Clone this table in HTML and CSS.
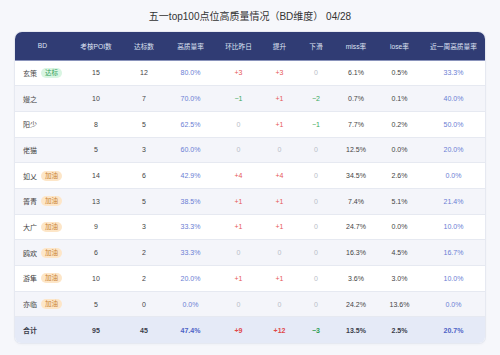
FILE: index.html
```html
<!DOCTYPE html>
<html lang="zh-CN">
<head>
<meta charset="utf-8">
<title>五一top100点位高质量情况</title>
<link rel="stylesheet" href="styles.css">
</head>
<body>
<div class="page">
  <h1 class="title">五一top100点位高质量情况（BD维度） 04/28</h1>
  <div class="card">
    <table class="grid">
      <colgroup>
        <col class="c1"><col class="c2"><col class="c3"><col class="c4"><col class="c5">
        <col class="c6"><col class="c7"><col class="c8"><col class="c9"><col class="c10">
      </colgroup>
      <thead>
        <tr>
          <th>BD</th><th>考核POI数</th><th>达标数</th><th>高质量率</th><th>环比昨日</th>
          <th>提升</th><th>下滑</th><th>miss率</th><th>lose率</th><th>近一周高质量率</th>
        </tr>
      </thead>
      <tbody>
        <tr>
          <td class="name">玄策<span class="tag ok">达标</span></td><td>15</td><td>12</td><td class="rate">80.0%</td>
          <td class="up">+3</td><td class="up">+3</td><td class="zero">0</td><td>6.1%</td><td>0.5%</td><td class="rate">33.3%</td>
        </tr>
        <tr>
          <td class="name">嫚之</td><td>10</td><td>7</td><td class="rate">70.0%</td>
          <td class="down">−1</td><td class="up">+1</td><td class="down">−2</td><td>0.7%</td><td>0.1%</td><td class="rate">40.0%</td>
        </tr>
        <tr>
          <td class="name">阳少</td><td>8</td><td>5</td><td class="rate">62.5%</td>
          <td class="zero">0</td><td class="up">+1</td><td class="down">−1</td><td>7.7%</td><td>0.2%</td><td class="rate">50.0%</td>
        </tr>
        <tr>
          <td class="name">佬猫</td><td>5</td><td>3</td><td class="rate">60.0%</td>
          <td class="zero">0</td><td class="zero">0</td><td class="zero">0</td><td>12.5%</td><td>0.0%</td><td class="rate">20.0%</td>
        </tr>
        <tr>
          <td class="name">如乂<span class="tag go">加油</span></td><td>14</td><td>6</td><td class="rate">42.9%</td>
          <td class="up">+4</td><td class="up">+4</td><td class="zero">0</td><td>34.5%</td><td>2.6%</td><td class="rate">0.0%</td>
        </tr>
        <tr>
          <td class="name">箐青<span class="tag go">加油</span></td><td>13</td><td>5</td><td class="rate">38.5%</td>
          <td class="up">+1</td><td class="up">+1</td><td class="zero">0</td><td>7.4%</td><td>5.1%</td><td class="rate">21.4%</td>
        </tr>
        <tr>
          <td class="name">大广<span class="tag go">加油</span></td><td>9</td><td>3</td><td class="rate">33.3%</td>
          <td class="up">+1</td><td class="up">+1</td><td class="zero">0</td><td>24.7%</td><td>0.0%</td><td class="rate">10.0%</td>
        </tr>
        <tr>
          <td class="name">鸥欢<span class="tag go">加油</span></td><td>6</td><td>2</td><td class="rate">33.3%</td>
          <td class="zero">0</td><td class="zero">0</td><td class="zero">0</td><td>16.3%</td><td>4.5%</td><td class="rate">16.7%</td>
        </tr>
        <tr>
          <td class="name">游隼<span class="tag go">加油</span></td><td>10</td><td>2</td><td class="rate">20.0%</td>
          <td class="up">+1</td><td class="up">+1</td><td class="zero">0</td><td>3.6%</td><td>3.0%</td><td class="rate">10.0%</td>
        </tr>
        <tr>
          <td class="name">亦临<span class="tag go">加油</span></td><td>5</td><td>0</td><td class="rate">0.0%</td>
          <td class="zero">0</td><td class="zero">0</td><td class="zero">0</td><td>24.2%</td><td>13.6%</td><td class="rate">0.0%</td>
        </tr>
      </tbody>
      <tfoot>
        <tr>
          <td class="name">合计</td><td>95</td><td>45</td><td class="rate">47.4%</td>
          <td class="up">+9</td><td class="up">+12</td><td class="down">−3</td><td>13.5%</td><td>2.5%</td><td class="rate">20.7%</td>
        </tr>
      </tfoot>
    </table>
  </div>
</div>
</body>
</html>
```

FILE: styles.css
```css
* { box-sizing: border-box; }
html, body {
  margin: 0;
  padding: 0;
  background: #f6f7fb;
}
body {
  font-family: "Liberation Sans", "Noto Sans CJK SC", sans-serif;
  color: #444;
}
.page {
  width: 500px;
  height: 355px;
  padding: 0 15px;
}
.title {
  margin: 0;
  height: 32px;
  line-height: 33px;
  font-size: 10px;
  font-weight: normal;
  text-align: center;
  color: #333;
  font-family: "Liberation Sans", "Noto Sans CJK SC", sans-serif;
}
.card {
  width: 470px;
  border-radius: 7px 7px 6px 6px;
  overflow: hidden;
  background: #fff;
  box-shadow: 0 0 0 1px #e6e9f1, 0 1px 3px rgba(40, 50, 100, 0.06);
}
.grid {
  width: 100%;
  border-collapse: collapse;
  table-layout: fixed;
  font-size: 7px;
}
.c1 { width: 55px; }
.c2 { width: 52px; }
.c3 { width: 44px; }
.c4 { width: 49px; }
.c5 { width: 47px; }
.c6 { width: 35px; }
.c7 { width: 38px; }
.c8 { width: 42px; }
.c9 { width: 45px; }
.c10 { width: 63px; }
thead th {
  height: 28px;
  background: #303c74;
  color: #dfe3f3;
  font-weight: normal;
  font-size: 6.7px;
  text-align: center;
  padding: 0;
  border-bottom: 1px solid #8a93bb;
}
tbody td, tfoot td {
  height: 25.7px;
  text-align: center;
  padding: 0;
  border-bottom: 1px solid #e6e9f1;
  white-space: nowrap;
}
tbody tr:nth-child(even) td { background: #f4f5fa; }
tbody tr:nth-child(odd) td { background: #fff; }
td.name {
  text-align: left;
  padding-left: 8px;
  color: #444;
}
.tag {
  display: inline-block;
  margin-left: 4px;
  padding: 0 4px;
  height: 10px;
  line-height: 10px;
  border-radius: 5px;
  font-size: 6.5px;
  vertical-align: 1px;
}
.tag.ok { background: #d9f5e2; color: #2f9e58; }
.tag.go { background: #fde6c8; color: #c98336; }
.rate { color: #6a7ed4; }
.up { color: #e65757; }
.down { color: #3aa85c; }
.zero { color: #b9bdc8; }
tfoot td {
  background: #e5eaf7;
  border-bottom: none;
  font-weight: bold;
  color: #3a3d4a;
  height: 26px;
}
tfoot td.rate { color: #4d63c6; }
tfoot td.up { color: #e04848; }
tfoot td.down { color: #2f9e55; }
tfoot td.name { color: #3a3d4a; }
```
